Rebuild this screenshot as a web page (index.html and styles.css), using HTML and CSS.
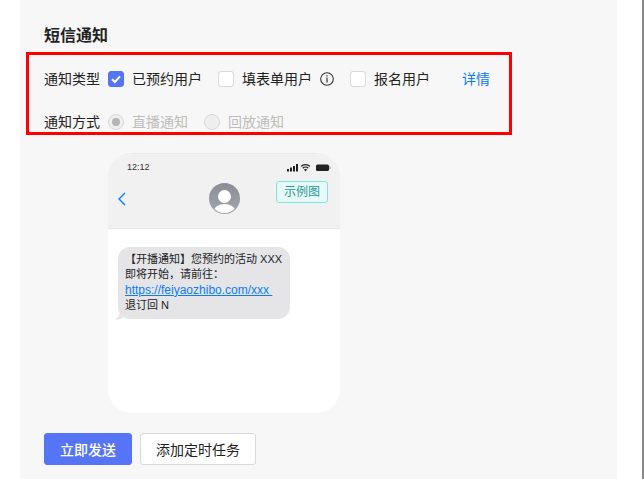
FILE: index.html
```html
<!DOCTYPE html>
<html lang="zh-CN">
<head>
    <meta charset="UTF-8">
    <title>短信通知</title>
    <link rel="stylesheet" href="styles.css">
</head>
<body>
    <div class="panel">
        <h2 class="title">短信通知</h2>

        <div class="form-box">
            <div class="form-row row-type">
                <span class="form-label">通知类型</span>
                <label class="option opt-booked">
                    <span class="check checked">
                        <svg width="12" height="12" viewBox="0 0 12 12"><path d="M2 6.2 4.9 9 10 3.4" fill="none" stroke="#fff" stroke-width="2"/></svg>
                    </span>
                    已预约用户
                </label>
                <label class="option opt-form">
                    <span class="check"></span>
                    填表单用户
                </label>
                <svg class="info-icon" width="14" height="14" viewBox="0 0 14 14">
                    <circle cx="7" cy="7" r="6.3" fill="none" stroke="#333" stroke-width="1.1"/>
                    <rect x="6.4" y="3.2" width="1.2" height="1.3" fill="#333"/>
                    <rect x="6.4" y="5.6" width="1.2" height="5" fill="#333"/>
                </svg>
                <label class="option opt-signup">
                    <span class="check"></span>
                    报名用户
                </label>
                <a class="detail-link">详情</a>
            </div>
            <div class="form-row row-way">
                <span class="form-label">通知方式</span>
                <label class="option disabled opt-live">
                    <span class="radio checked"></span>
                    直播通知
                </label>
                <label class="option disabled">
                    <span class="radio"></span>
                    回放通知
                </label>
            </div>
        </div>

        <div class="phone">
            <div class="phone-head">
                <div class="status-bar">
                    <span class="time">12:12</span>
                    <svg width="44" height="9" viewBox="0 0 44 9">
                        <rect x="0" y="6" width="2" height="2.5" fill="#222"/>
                        <rect x="3" y="4.5" width="2" height="4" fill="#222"/>
                        <rect x="6" y="3" width="2" height="5.5" fill="#222"/>
                        <rect x="9" y="1" width="2" height="7.5" fill="#222"/>
                        <path d="M14 3.4a6.4 6.4 0 0 1 9 0M15.7 5.2a4 4 0 0 1 5.6 0" fill="none" stroke="#222" stroke-width="1.3"/>
                        <path d="M17 6.6 18.5 5.8 20 6.6 18.5 8.4Z" fill="#222"/>
                        <rect x="29" y="1.5" width="13" height="6.5" rx="1.6" fill="#222"/>
                        <rect x="42.5" y="3.5" width="1" height="2.5" fill="#888"/>
                    </svg>
                </div>
                <div class="nav-bar">
                    <svg class="back" width="9" height="14" viewBox="0 0 9 14"><path d="M8 1 2 7l6 6" fill="none" stroke="#0a7cff" stroke-width="1.4"/></svg>
                    <svg class="avatar" width="31" height="31" viewBox="0 0 31 31">
                        <defs>
                            <clipPath id="avatar-clip"><circle cx="15.5" cy="15.5" r="14.6"/></clipPath>
                            <linearGradient id="avatar-bg" x1="0" y1="0" x2="0" y2="1">
                                <stop offset="0" stop-color="#8a8d96"/>
                                <stop offset="1" stop-color="#a4a6ad"/>
                            </linearGradient>
                        </defs>
                        <circle cx="15.5" cy="15.5" r="15.5" fill="url(#avatar-bg)"/>
                        <circle cx="15.5" cy="13.5" r="6.5" fill="#fff"/>
                        <ellipse cx="15.5" cy="28.5" rx="11" ry="7.5" fill="#fff" clip-path="url(#avatar-clip)"/>
                    </svg>
                </div>
            </div>
            <span class="sample-tag">示例图</span>
            <div class="bubble">
                【开播通知】您预约的活动 XXX<br>
                即将开始，请前往：<br>
                <a class="sms-link">https://feiyaozhibo.com/xxx&nbsp;</a><br>
                退订回 N
                <svg class="bubble-tail" width="10" height="8" viewBox="0 0 10 8"><path d="M5 0C5 3 3 6 0 7.5 3 8 6 7 9 5Z" fill="#e5e5e8"/></svg>
            </div>
        </div>

        <div class="actions">
            <button class="btn btn-primary">立即发送</button>
            <button class="btn">添加定时任务</button>
        </div>
    </div>
    <div class="scroll-edge"></div>
</body>
</html>
```

FILE: styles.css
```css
* {
    margin: 0;
    padding: 0;
    box-sizing: border-box;
    font-family: "Liberation Sans", "Noto Sans CJK SC", sans-serif;
}

html,
body {
    height: 479px;
    overflow: hidden;
}

body {
    background: #fff;
    color: #222;
    display: flex;
    justify-content: space-between;
}

.panel {
    width: 597px;
    height: 479px;
    margin-left: 20px;
    padding: 26px 0 0 24px;
    background: #f7f7f7;
}

.scroll-edge {
    width: 2px;
    background: #8a8a8a;
}

.title {
    font-size: 16px;
    font-weight: 600;
    line-height: 20px;
}

.form-box {
    width: 486px;
    height: 83px;
    margin: 6px 0 18px -18px;
    padding: 14px 0 0 15px;
    border: 3px solid #ff0000;
}

.form-row {
    display: flex;
    align-items: center;
    height: 20px;
    font-size: 14px;
    line-height: 20px;
}

.row-way {
    margin-top: 23px;
}

.form-label {
    width: 64px;
}

.option {
    display: flex;
    align-items: center;
    gap: 8px;
}

.opt-booked {
    margin-right: 16px;
}

.opt-form {
    margin-right: 8px;
}

.opt-signup {
    margin-left: 16px;
}

.opt-live {
    margin-right: 16px;
}

.disabled {
    color: #bdbdbd;
}

.check {
    display: flex;
    align-items: center;
    justify-content: center;
    width: 16px;
    height: 16px;
    background: #fff;
    border: 1px solid #d9d9d9;
    border-radius: 3px;
}

.check.checked {
    background: #5575f6;
    border-color: #5575f6;
}

.radio {
    display: flex;
    align-items: center;
    justify-content: center;
    width: 16px;
    height: 16px;
    background: #eeeeee;
    border: 1px solid #d9d9d9;
    border-radius: 50%;
}

.radio.checked::after {
    content: "";
    width: 8px;
    height: 8px;
    background: #b5b5b5;
    border-radius: 50%;
}

.detail-link {
    margin-left: 32px;
    color: #0a7cff;
}

.phone {
    position: relative;
    width: 232px;
    height: 260px;
    margin-left: 64px;
    background: #fff;
    border-top: 1px solid #ebebeb;
    border-radius: 24px;
    overflow: hidden;
}

.phone-head {
    height: 75px;
    background: #f1f1f1;
    border-bottom: 1px solid #e8e8e8;
}

.status-bar {
    display: flex;
    align-items: center;
    justify-content: space-between;
    height: 26px;
    padding: 0 9px 0 19px;
}

.time {
    font-size: 9px;
    color: #333;
}

.nav-bar {
    position: relative;
    display: flex;
    justify-content: center;
    padding-top: 3px;
}

.back {
    position: absolute;
    left: 9px;
    top: 12px;
}

.sample-tag {
    position: absolute;
    left: 168px;
    top: 27px;
    width: 52px;
    height: 22px;
    font-size: 12px;
    line-height: 20px;
    text-align: center;
    color: #2a9a94;
    background: #e6fbf9;
    border: 1px solid #7fe5dc;
    border-radius: 3px;
}

.bubble {
    position: relative;
    width: 172px;
    height: 72px;
    margin: 18px 0 0 10px;
    padding: 5px 0 0 7px;
    font-size: 11px;
    line-height: 15.3px;
    color: #222;
    background: #e5e5e8;
    border-radius: 12px;
}

.sms-link {
    font-size: 12px;
    color: #0a7cff;
    text-decoration: underline;
}

.bubble-tail {
    position: absolute;
    left: -3px;
    bottom: -1px;
}

.actions {
    display: flex;
    gap: 8px;
    margin-top: 20px;
}

.btn {
    height: 32px;
    padding: 0 15px;
    font-size: 14px;
    color: #222;
    background: #fff;
    border: 1px solid #d9d9d9;
    border-radius: 3px;
}

.btn-primary {
    width: 88px;
    font-weight: 500;
    color: #fff;
    background: #5575f6;
    border-color: #5575f6;
}
```
